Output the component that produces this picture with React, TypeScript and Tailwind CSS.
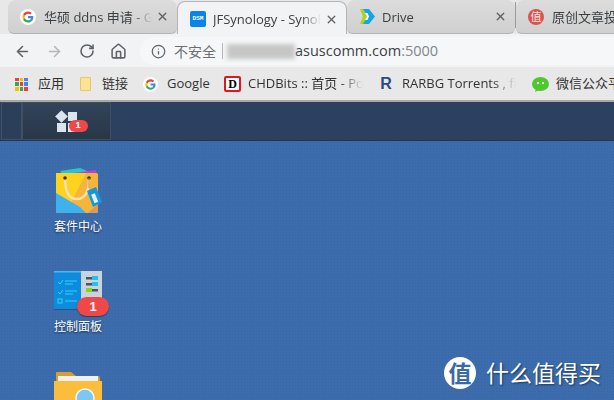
import { ArrowLeft, ArrowRight, RotateCw, Home, Info, X } from "lucide-react";

const CJK = "font-['Open_Sans','Noto_Sans_CJK_SC',sans-serif]";

function GoogleIcon({ size = 16 }: { size?: number }) {
  return (
    <svg width={size} height={size} viewBox="0 0 48 48" className="shrink-0">
      <circle cx="24" cy="24" r="24" fill="#fff" />
      <path fill="#EA4335" d="M24 14c2.7 0 5 1 6.800 2.700l4.600-4.600C32.400 9.400 28.500 7.500 24 7.500c-6.400 0-12 3.700-14.700 9.100l5.400 4.200C16 17 19.700 14 24 14z" />
      <path fill="#4285F4" d="M40 24.400c0-1.200-.1-2.300-.3-3.400H24v6.500h9c-.4 2.100-1.600 3.900-3.400 5.100l5.200 4.100C38 33.700 40 29.500 40 24.400z" />
      <path fill="#FBBC05" d="M14.700 27.200c-.3-1-.5-2.100-.5-3.200s.2-2.200.5-3.200l-5.400-4.200C8.200 18.800 7.500 21.300 7.500 24s.7 5.200 1.800 7.400l5.400-4.200z" />
      <path fill="#34A853" d="M24 40.500c4.500 0 8.200-1.500 10.800-3.800l-5.200-4.100c-1.400 1-3.300 1.500-5.600 1.500-4.300 0-8-3-9.300-6.900l-5.400 4.200c2.700 5.400 8.300 9.100 14.700 9.100z" />
    </svg>
  );
}

function DsmIcon() {
  return (
    <div className="w-4 h-4 shrink-0 rounded-[2px] bg-[#0a84e8] flex items-center justify-center">
      <span className="text-white text-[6px] font-bold leading-none font-['Liberation_Mono',monospace]">DSM</span>
    </div>
  );
}

function DriveIcon() {
  return (
    <svg width="17" height="17" viewBox="0 0 17 17" className="shrink-0">
      <path d="M1 1h5l5 7.500-5 7.500H1l3-7.500z" fill="#a8d321" />
      <path d="M4 1h6l6 7.500-6 7.500H4l5-7.500z" fill="#12a5e8" />
      <path d="M6 5h2.500L10 8.500 8.500 12H6l2-3.500z" fill="#fff" />
    </svg>
  );
}

function SmzdmIcon() {
  return (
    <div className="w-4 h-4 shrink-0 rounded-full bg-[#d9534f] flex items-center justify-center">
      <span className="text-[#fbe3e0] text-[11px] leading-none">值</span>
    </div>
  );
}

function Tab({
  icon,
  title,
  active,
  width,
  gap = "ml-[8px]",
}: {
  icon: React.ReactNode;
  title: string;
  active?: boolean;
  width: string;
  gap?: string;
}) {
  return (
    <div
      className={`${width} shrink-0 flex items-center pl-[12px] pr-[6px] rounded-t-[8px] ${
        active
          ? "bg-[#f1f3f4] h-[35px] z-10 mt-px border-x border-t border-[#b4b4b4]"
          : "bg-gradient-to-b from-[#dcdcdc] to-[#d0d0d0] h-[34px] rounded-b-[6px] border-b border-[#b4b4b4]"
      }`}
    >
      {icon}
      <span className={`${gap} flex-1 min-w-0 whitespace-nowrap overflow-hidden text-[13px] leading-[20px] text-[#3c4043] [mask-image:linear-gradient(to_right,black_82%,transparent)]`}>
        {title}
      </span>
      <X size={13} strokeWidth={2.5} className="ml-[4px] mr-[2px] shrink-0 text-[#5f6368]" />
    </div>
  );
}

function Bookmark({
  icon,
  label,
  fade,
  width,
  gap = "gap-[9px]",
}: {
  icon: React.ReactNode;
  label: string;
  fade?: boolean;
  width: string;
  gap?: string;
}) {
  return (
    <div className={`${width} ${gap} shrink-0 flex items-center`}>
      {icon}
      <span
        className={`text-[13px] text-[#333] whitespace-nowrap overflow-hidden flex-1 min-w-0 ${
          fade ? "mr-[16px] [mask-image:linear-gradient(to_right,black_80%,transparent)]" : ""
        }`}
      >
        {label}
      </span>
    </div>
  );
}

function BagIcon() {
  return (
    <svg width="48" height="48" viewBox="0 0 48 48">
      <path d="M6 4l20-3 12 5-28 3z" fill="#25c4d8" />
      <path d="M12 7l30-4 1 7H12z" fill="#c93ad6" />
      <rect x="2" y="6" width="42" height="40" rx="1.500" fill="#f6b53a" />
      <path d="M2 6h30L16 38 2 26z" fill="#ffd21f" />
      <path d="M2 26l24 14 6 6H3.500Q2 46 2 44.500z" fill="#3fb2ee" />
      <path d="M34 46l10-9v7.500q0 1.500-1.500 1.500z" fill="#d99a5a" />
      <path d="M11 11c0 13 4 21 12 21s12-8 12-21" fill="none" stroke="#f3e0b0" strokeWidth="2.500" />
      <circle cx="11" cy="11" r="1.800" fill="#40311a" />
      <circle cx="35" cy="11" r="1.800" fill="#40311a" />
      <path d="M35 11v10" stroke="#b99a35" strokeWidth="1" fill="none" />
      <path d="M33 24l9-4 6 15-9 5z" fill="#1597dc" />
      <rect x="38.500" y="27" width="4" height="9" fill="#dff3fc" transform="rotate(-22 40 31)" />
    </svg>
  );
}

function PanelIcon() {
  return (
    <svg width="48" height="39" viewBox="0 0 48 39" className="mb-[5px]">
      <rect width="48" height="38" fill="#0d8bdc" />
      <rect width="48" height="1.500" fill="#4cb8f0" />
      <rect x="27" width="21" height="38" fill="#c9d3dc" />
      <rect y="38" width="48" height="1" fill="#2a5488" />
      <path d="M4 11l2 2 3-4M4 21l2 2 3-4" fill="none" stroke="#35d3f5" strokeWidth="1" />
      <rect x="4" y="28" width="4" height="4" fill="none" stroke="#35d3f5" />
      <path d="M11 10h12M11 13h8M11 20h12M11 23h8M11 30h12" stroke="#35d3f5" strokeWidth="1" />
      <rect x="32" y="6" width="12" height="2.500" fill="#4a5660" />
      <rect x="38" y="5" width="6" height="4" fill="#22c2ea" />
      <rect x="32" y="12" width="12" height="2.500" fill="#4a5660" />
      <rect x="38" y="11" width="6" height="4" fill="#22c2ea" />
      <rect x="32" y="18" width="12" height="2.500" fill="#4a5660" />
      <rect x="32" y="17" width="6" height="4" fill="#7fdc14" />
    </svg>
  );
}

function FolderIcon() {
  return (
    <svg width="48" height="48" viewBox="0 0 48 48">
      <path d="M2 6q0-1 1-1h14l5 4h22q2 0 2 2v37H2z" fill="#d99f2e" />
      <rect x="4" y="9" width="40" height="7" fill="#eef0f2" />
      <path d="M0 14h48v34H0z" fill="#fbbd3c" />
      <circle cx="31" cy="31" r="9" fill="#7cc8f2" stroke="#f4f8fb" strokeWidth="1.500" />
    </svg>
  );
}

function DesktopItem({ icon, label, badge }: { icon: React.ReactNode; label?: string; badge?: boolean }) {
  return (
    <div className="h-[100px] w-[60px] flex flex-col items-center">
      <div className="relative h-[48px] flex items-end">
        {icon}
        {badge && (
          <div className="absolute right-[-7px] top-[30px] w-[32px] h-[19px] rounded-full bg-[#f04848] shadow-[0_1px_1px_rgba(0,0,0,0.4)] flex items-center justify-center text-white text-[13px] font-bold font-['Liberation_Sans',sans-serif]">
            1
          </div>
        )}
      </div>
      {label && (
        <span className="mt-[4px] text-[12px] leading-[16px] text-white whitespace-nowrap [text-shadow:0_1px_2px_rgba(0,0,0,0.6)]">
          {label}
        </span>
      )}
    </div>
  );
}

export default function App() {
  return (
    <div className={`w-[614px] h-[400px] overflow-hidden flex flex-col ${CJK}`}>
      {/* tab strip */}
      <div className="h-[34px] shrink-0 bg-[#e8e8e8] flex items-start overflow-hidden">
        <div className="w-[8px] shrink-0" />
        <Tab width="w-[169px]" icon={<GoogleIcon />} title="华硕 ddns 申请 - Google" />
        <Tab width="w-[170px]" active gap="ml-[7px]" icon={<DsmIcon />} title="JFSynology - Synology" />
        <Tab width="w-[168px]" gap="ml-[6px]" icon={<DriveIcon />} title="Drive" />
        <div className="w-px h-[26px] mt-[2px] bg-[#9a9a9a] shrink-0" />
        <Tab width="w-[170px]" icon={<SmzdmIcon />} title="原创文章投稿" />
      </div>

      {/* toolbar */}
      <div className="h-[33px] shrink-0 bg-[#f1f3f4] flex items-center pl-[14px] pt-px z-10">
        <ArrowLeft size={17} strokeWidth={2.2} className="text-[#5f6368] shrink-0" />
        <ArrowRight size={17} strokeWidth={2.2} className="ml-[15px] text-[#b4b7ba] shrink-0" />
        <RotateCw size={16} strokeWidth={2.4} className="ml-[16px] text-[#5f6368] shrink-0" />
        <Home size={17} strokeWidth={2.2} className="ml-[15px] text-[#5f6368] shrink-0" />
        <div className="ml-[13px] flex-1 h-[28px] rounded-l-full bg-[#f6f7f8] flex items-center pl-[11px]">
          <Info size={15} strokeWidth={2} className="text-[#5f6368] shrink-0" />
          <span className="ml-[8px] text-[14px] text-[#6b6f73]">不安全</span>
          <div className="ml-[6px] w-px h-[16px] bg-[#b5b8bb]" />
          <div className="ml-[4px] w-[68px] h-[15px] bg-[#c6c6c6] blur-[2px]" />
          <span className="text-[14.500px] text-[#3c4043]">asuscomm.com</span>
          <span className="text-[14.500px] text-[#80868b]">:5000</span>
        </div>
      </div>

      {/* bookmarks */}
      <div className="h-[35px] shrink-0 bg-[#e8e8e8] border-b-2 border-[#a9a9a9] flex items-center pl-[15px] pt-px">
        <div className="w-[65px] shrink-0 flex items-center gap-[10px]">
          <div className="grid grid-cols-3 gap-[1px] w-[13px] h-[13px] shrink-0">
            {["#ea4335", "#fbbc05", "#4285f4", "#34a853", "#ea4335", "#4285f4", "#fbbc05", "#34a853", "#ea4335"].map((c, i) => (
              <div key={i} style={{ backgroundColor: c }} />
            ))}
          </div>
          <span className="text-[13px] text-[#333]">应用</span>
        </div>
        <Bookmark
          width="w-[63px]"
          label="链接"
          icon={<div className="w-[11px] h-[14px] shrink-0 mr-[2px] rounded-[1px] bg-[#fde293] border border-[#e8c766]" />}
        />
        <Bookmark width="w-[81px]" label="Google" icon={<GoogleIcon size={15} />} />
        <Bookmark
          width="w-[155px]"
          gap="gap-[7px]"
          fade
          label="CHDBits :: 首页 - Powered"
          icon={
            <div className="w-[17px] h-[16px] shrink-0 bg-[#e8141a] rounded-[2px] flex items-center justify-center">
              <div className="w-[13px] h-[12px] bg-white flex items-center justify-center text-[12px] leading-none font-bold text-black font-['Liberation_Serif',serif]">
                D
              </div>
            </div>
          }
        />
        <Bookmark
          width="w-[153px]"
          fade
          label="RARBG Torrents , filmes"
          icon={<span className="w-[14px] text-center text-[16px] leading-none font-bold text-[#2a4a86] font-['Liberation_Sans',sans-serif] shrink-0">R</span>}
        />
        <Bookmark
          width="w-[90px]"
          gap="gap-[7px]"
          label="微信公众平台"
          icon={
            <svg width="17" height="15" viewBox="0 0 17 15" className="shrink-0">
              <ellipse cx="8.500" cy="7" rx="8.500" ry="7" fill="#4fc72f" />
              <path d="M4 11l-1 4 4-2z" fill="#4fc72f" />
              <circle cx="6" cy="6" r="1.100" fill="#fff" />
              <circle cx="11" cy="6" r="1.100" fill="#fff" />
            </svg>
          }
        />
      </div>

      {/* DSM taskbar */}
      <div className="h-[39px] shrink-0 bg-[#2c415f] flex items-stretch pl-px border-b border-[#22344e]">
        <div className="w-[21px] border border-[#3f5268] bg-[#2b3f58] shrink-0" />
        <div className="w-[89px] border border-[#3f4e60] bg-gradient-to-b from-[#334459] to-[#283747] shrink-0 flex items-center justify-center">
          <div className="relative grid grid-cols-[9px_9px] grid-rows-[9px_9px] gap-[2px] mt-[1px]">
            <div className="w-[9px] h-[9px] rotate-45 bg-[#dbe4ee]" />
            <div className="w-[9px] h-[9px] bg-[#dbe4ee]" />
            <div className="w-[9px] h-[9px] bg-[#dbe4ee]" />
            <div className="w-[9px] h-[9px] bg-[#dbe4ee]" />
            <div className="absolute left-[12px] top-[8px] w-[19px] h-[12px] rounded-full bg-[#f04848] flex items-center justify-center text-white text-[9px] font-bold font-['Liberation_Sans',sans-serif]">
              1
            </div>
          </div>
        </div>
      </div>

      {/* desktop */}
      <div className="relative flex-1 bg-[#3c6cab] bg-[radial-gradient(#3766a4_1px,transparent_1px)] bg-[length:3px_3px] pl-[48px] pt-[26px]">
        <DesktopItem icon={<BagIcon />} label="套件中心" />
        <DesktopItem icon={<PanelIcon />} label="控制面板" badge />
        <DesktopItem icon={<FolderIcon />} />

        {/* watermark */}
        <div className="absolute left-[444px] top-[216px] flex items-center gap-[10px] text-white [text-shadow:1px_1px_2px_rgba(0,0,0,0.5)]">
          <div className="w-[32px] h-[32px] rounded-full bg-white flex items-center justify-center">
            <span className="text-[#3a69a8] text-[23px] leading-none font-bold [text-shadow:none]">值</span>
          </div>
          <span className="text-[23px] leading-none whitespace-nowrap">什么值得买</span>
        </div>
      </div>
    </div>
  );
}
